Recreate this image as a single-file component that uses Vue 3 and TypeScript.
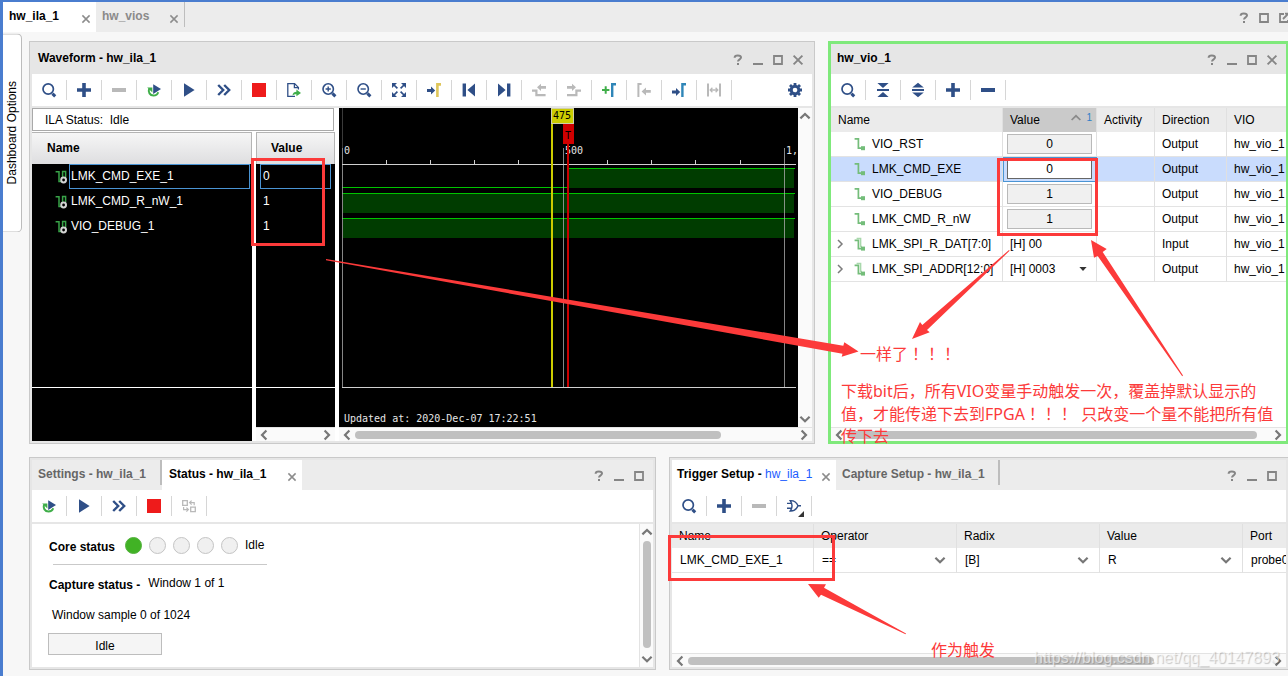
<script setup lang="ts">
import { h, ref, type FunctionalComponent } from 'vue'

interface Shape {
  d: string
  fill?: string
  stroke?: string
  w?: number
}

const NAVY = '#2f4f87'
const GREEN = '#3fae49'
const GRAY = '#b9b9b9'
const DARK = '#777777'
const BLUE = '#2f86b8'

const shapes: Record<string, Shape[]> = {
  search: [
    { d: 'M12.4 7a5.2 5.2 0 1 1-10.4 0a5.2 5.2 0 1 1 10.4 0z', stroke: NAVY, w: 1.7 },
    { d: 'M11.4 11.6L14.2 14.4', stroke: NAVY, w: 3 },
  ],
  plus: [{ d: 'M6.2 1h3.6v5.2H15v3.6H9.8V15H6.2V9.8H1V6.2h5.2z', fill: NAVY }],
  minus: [{ d: 'M1 6h14v4h-14z', fill: NAVY }],
  minusOff: [{ d: 'M1 6h14v4h-14z', fill: GRAY }],
  rerun: [
    { d: 'M3.2 6.5C1.8 10 4 13.6 7.4 13.6C10 13.6 11.6 12.2 12.2 10.2', stroke: GREEN, w: 2 },
    { d: 'M1.2 5.4h5.2v5z', fill: GREEN },
    { d: 'M7.2 2.2L15 7L7.2 12z', fill: NAVY },
  ],
  play: [{ d: 'M3 1.2L13.6 8L3 14.8z', fill: NAVY }],
  forward: [{ d: 'M2.2 3L7.2 8L2.2 13M8.2 3L13.2 8L8.2 13', stroke: NAVY, w: 2.4 }],
  stop: [{ d: 'M1 1h14v14h-14z', fill: '#ee1b1b' }],
  export: [
    { d: 'M9 14.4H1.8V1.6H8.6L12.4 5.4V7.4M8.4 1.8V5.6H12.2', stroke: NAVY, w: 1.3 },
    { d: 'M6.4 13.6C6.8 10.8 8.6 9.8 10.4 9.8V7.6L15 11L10.4 14.2V12.2C8.8 12 7.6 12.6 6.4 13.6z', fill: GREEN },
  ],
  zoomIn: [
    { d: 'M12.4 7a5.2 5.2 0 1 1-10.4 0a5.2 5.2 0 1 1 10.4 0z', stroke: NAVY, w: 1.6 },
    { d: 'M11.4 11.4L14.4 14.4', stroke: NAVY, w: 3 },
    { d: 'M4.6 7H9.8M7.2 4.4V9.6', stroke: NAVY, w: 1.4 },
  ],
  zoomOut: [
    { d: 'M12.4 7a5.2 5.2 0 1 1-10.4 0a5.2 5.2 0 1 1 10.4 0z', stroke: NAVY, w: 1.6 },
    { d: 'M11.4 11.4L14.4 14.4', stroke: NAVY, w: 3 },
    { d: 'M4.6 7H9.8', stroke: NAVY, w: 1.4 },
  ],
  fit: [
    { d: 'M1 1h5l-5 5zM15 1v5l-5-5zM1 15v-5l5 5zM15 15h-5l5-5z', fill: NAVY },
    { d: 'M2.5 2.5L6.4 6.4M13.5 2.5L9.6 6.4M2.5 13.5L6.4 9.6M13.5 13.5L9.6 9.6', stroke: NAVY, w: 1.7 },
  ],
  gotoCursor: [
    { d: 'M1 7h4V4.4L9.2 8.4L5 12.4V10H1z', fill: NAVY },
    { d: 'M15 2.4H11.4V15', stroke: '#dfc65a', w: 2.6 },
  ],
  first: [{ d: 'M1.6 1.4h3.4v13.2h-3.4zM14 1.4v13.2L6.4 8z', fill: NAVY }],
  last: [{ d: 'M11 1.4h3.4v13.2h-3.4zM2 1.4v13.2L9.6 8z', fill: NAVY }],
  prevEdge: [
    { d: 'M1 8.6H5.4V13.2H14.6', stroke: GRAY, w: 2.2 },
    { d: 'M6 5.2L10 1.8V4H15V6.8H10V9z', fill: GRAY },
  ],
  nextEdge: [
    { d: 'M1 13.2H10.4V8.6H15', stroke: GRAY, w: 2.2 },
    { d: 'M10 5.2L6 1.8V4H1V6.8H6V9z', fill: GRAY },
  ],
  addMarker: [
    { d: 'M1 8H8.4M4.7 4.3V11.7', stroke: GREEN, w: 2 },
    { d: 'M15 2.2H11.2V15', stroke: BLUE, w: 2.4 },
  ],
  prevMarker: [
    { d: 'M5.6 2H2.4V15', stroke: GRAY, w: 2 },
    { d: 'M5.6 9.4L10 5.4V8H14.8V10.8H10V13.4z', fill: GRAY },
  ],
  nextMarker: [
    { d: 'M1 8.6h4V6L9.2 10L5 14V11.6H1z', fill: NAVY },
    { d: 'M15 2.2H11.4V15', stroke: BLUE, w: 2.4 },
  ],
  span: [
    { d: 'M2 1.4V14.6M14 1.4V14.6', stroke: GRAY, w: 2 },
    { d: 'M4.4 8H11.6M6.4 5.8L4.2 8L6.4 10.2M9.6 5.8L11.8 8L9.6 10.2', stroke: GRAY, w: 1.3 },
  ],
  gear: [
    { d: 'M8 4.2a3.8 3.8 0 1 1 0 7.6a3.8 3.8 0 1 1 0-7.6z', stroke: NAVY, w: 3 },
    { d: 'M8 1V3.4M8 12.6V15M1 8H3.4M12.6 8H15M3 3L4.7 4.7M11.3 11.3L13 13M13 3L11.3 4.7M4.7 11.3L3 13', stroke: NAVY, w: 2.8 },
  ],
  collapse: [{ d: 'M2.4 1h11.2L8 6zM2 7h12v2H2zM2.4 15h11.2L8 10z', fill: NAVY }],
  expand: [{ d: 'M2.2 5.6h11.6L8 .8zM2 7.1h12v1.8H2zM2.2 10.4h11.6L8 15.2z', fill: NAVY }],
  swap: [
    { d: 'M1.7 2.7h4.6v4.6H1.7zM9.7 9.1h4.6v4.6H9.7z', stroke: GRAY, w: 1.3 },
    { d: 'M8.4 4.6h4.8v2.6M10.6 2.6L8.6 4.6L10.6 6.6M2.6 9v2.6h4.6M5.4 9.6L7.4 11.6L5.4 13.6', stroke: GRAY, w: 1.2 },
  ],
  gate: [
    { d: 'M4.2 2.6C6.6 6 6.6 9.6 4.2 13C8.4 13.2 10.8 11 12 7.8C10.8 4.6 8.4 2.4 4.2 2.6zM1 5.4H5.4M1 10.2H5.4M12 7.8H15', stroke: NAVY, w: 1.4 },
  ],
  help: [
    { d: 'M4.6 5.8C4.6 4 6 3.4 7.8 3.4C9.8 3.4 11 4.2 11 5.6C11 7.4 8 7.4 8 9.6', stroke: '#858585', w: 2 },
    { d: 'M7 11h2v2h-2z', fill: '#858585' },
  ],
  minimize: [{ d: 'M3 11h10v2H3z', fill: '#858585' }],
  maximize: [{ d: 'M4 4h8v8H4z', stroke: '#858585', w: 1.8 }],
  popout: [{ d: 'M8 4H4V12H12V10M7 9L12 4M9 3.6H13V8', stroke: '#858585', w: 1.8 }],
  close: [{ d: 'M3.6 3.6L12.4 12.4M12.4 3.6L3.6 12.4', stroke: '#858585', w: 1.9 }],
  closeTab: [{ d: 'M4.4 4.4L11.6 11.6M11.6 4.4L4.4 11.6', stroke: '#8c8c8c', w: 1.5 }],
  left: [{ d: 'M10.4 3.4L6 8L10.4 12.6', stroke: DARK, w: 2.2 }],
  right: [{ d: 'M5.6 3.4L10 8L5.6 12.6', stroke: DARK, w: 2.2 }],
  up: [{ d: 'M3.4 10.4L8 6L12.6 10.4', stroke: DARK, w: 2.2 }],
  down: [{ d: 'M3.4 5.8L8 10.2L12.6 5.8', stroke: DARK, w: 2.2 }],
  expander: [{ d: 'M6 4L10 8L6 12', stroke: '#7c7c7c', w: 1.5 }],
  sort: [{ d: 'M3.6 10L8 5.8L12.4 10', stroke: '#8a8a8a', w: 1.7 }],
  caret: [{ d: 'M4.4 6h7.2L8 10z', fill: '#333333' }],
  signal: [
    { d: 'M2.6 2.8H6.4V12.2H9', stroke: '#74bd7a', w: 1.7 },
    { d: 'M9 10.2h4v4h-4z', fill: '#74bd7a' },
  ],
  bus: [
    { d: 'M4.6 2.6H8.6V10.4H10', stroke: '#a9d8ac', w: 1.5 },
    { d: 'M2.6 4.4H6.4V12.6H9', stroke: '#74bd7a', w: 1.7 },
    { d: 'M9 10.6h4v4h-4z', fill: '#74bd7a' },
  ],
  probe: [
    { d: 'M2.6 2.8H6V12.4H8M9.6 9V2.6H12.6V8', stroke: '#38a348', w: 1.5 },
    { d: 'M13 11a2.4 2.4 0 1 1-4.8 0a2.4 2.4 0 1 1 4.8 0z', stroke: '#d4d4d4', w: 2 },
  ],
}

const Glyph: FunctionalComponent<{ name: string }> = (props) =>
  h(
    'svg',
    { viewBox: '0 0 16 16', width: 16, height: 16, 'aria-hidden': 'true' },
    shapes[props.name].map((s) =>
      h('path', { d: s.d, fill: s.fill ?? 'none', stroke: s.stroke ?? 'none', 'stroke-width': s.w ?? 0 }),
    ),
  )
Glyph.props = ['name']

const waveTools = [
  'search', 'plus', 'minusOff', 'rerun', 'play', 'forward', 'stop', 'export', 'zoomIn', 'zoomOut',
  'fit', 'gotoCursor', 'first', 'last', 'prevEdge', 'nextEdge', 'addMarker', 'prevMarker', 'nextMarker', 'span',
]
const vioTools = ['search', 'collapse', 'expand', 'plus', 'minus']
const statusTools = ['rerun', 'play', 'forward', 'stop', 'swap']
const triggerTools = ['search', 'plus', 'minusOff', 'gate']

const signals = [
  { name: 'LMK_CMD_EXE_1', value: '0' },
  { name: 'LMK_CMD_R_nW_1', value: '1' },
  { name: 'VIO_DEBUG_1', value: '1' },
]
const selectedSignal = ref(0)

const probes = [
  { name: 'VIO_RST', value: '0', kind: 'button', dir: 'Output' },
  { name: 'LMK_CMD_EXE', value: '0', kind: 'button', dir: 'Output' },
  { name: 'VIO_DEBUG', value: '1', kind: 'button', dir: 'Output' },
  { name: 'LMK_CMD_R_nW', value: '1', kind: 'button', dir: 'Output' },
  { name: 'LMK_SPI_R_DAT[7:0]', value: '[H] 00', kind: 'text', dir: 'Input' },
  { name: 'LMK_SPI_ADDR[12:0]', value: '[H] 0003', kind: 'menu', dir: 'Output' },
]
const selectedProbe = ref(1)

const minorTicks = [47, 91, 135, 179, 268, 312, 356, 401]
const triggerFields = [
  { label: 'Operator', value: '==' },
  { label: 'Radix', value: '[B]' },
  { label: 'Value', value: 'R' },
]
</script>

<template>
  <div class="app">
    <nav class="topbar">
      <button class="tab active wide">hw_ila_1<Glyph name="closeTab" /></button>
      <button class="tab wide muted">hw_vios<Glyph name="closeTab" /></button>
      <span class="tab-rule"></span>
      <div class="win-tools clipped">
        <button aria-label="Help"><Glyph name="help" /></button>
        <button aria-label="Maximize"><Glyph name="maximize" /></button>
        <button aria-label="Float"><Glyph name="popout" /></button>
      </div>
    </nav>

    <div class="main">
      <button class="dashboard">Dashboard Options</button>

      <div class="rows">
        <div class="row upper">
          <section class="panel">
            <header class="title">
              <h2>Waveform - hw_ila_1</h2>
              <div class="win-tools">
                <button aria-label="Help"><Glyph name="help" /></button>
                <button aria-label="Minimize"><Glyph name="minimize" /></button>
                <button aria-label="Maximize"><Glyph name="maximize" /></button>
                <button aria-label="Close"><Glyph name="close" /></button>
              </div>
            </header>
            <div class="toolbar">
              <button v-for="t in waveTools" :key="t" :aria-label="t"><Glyph :name="t" /></button>
              <button class="end" aria-label="Settings"><Glyph name="gear" /></button>
            </div>
            <div class="body wave">
              <div class="wave-list">
                <div class="ila-status">ILA Status:&nbsp; Idle</div>
                <div class="wave-cols">
                  <div class="wave-col">
                    <div class="wave-head">Name</div>
                    <button
                      v-for="(s, i) in signals"
                      :key="s.name"
                      class="sig"
                      :class="{ on: i === selectedSignal }"
                      @click="selectedSignal = i"
                    >
                      <Glyph name="probe" /><span>{{ s.name }}</span>
                    </button>
                    <div class="fill"></div>
                    <div class="foot tall"></div>
                  </div>
                  <div class="wave-col">
                    <div class="wave-head val">Value</div>
                    <div v-for="(s, i) in signals" :key="s.name" class="sig-val" :class="{ on: i === selectedSignal }">
                      <span>{{ s.value }}</span>
                    </div>
                    <div class="fill"></div>
                    <div class="foot"></div>
                    <div class="hscroll"><Glyph name="left" /><i class="gap"></i><Glyph name="right" /></div>
                  </div>
                </div>
              </div>
              <div class="wave-view">
                <div class="wave-main">
                  <div class="canvas">
                    <svg width="459" height="319" viewBox="0 0 459 319" shape-rendering="crispEdges">
                      <path d="M3.5 0V40" stroke="#3a3a3a" />
                      <path d="M230 61h225v19h-225zM4 86h451v19h-451zM4 111h451v19h-451z" fill="#003c00" />
                      <path d="M3 79.5H229M229 60.5H456M3 85.5H456M3 110.5H456" stroke="#00c400" />
                      <path d="M3.5 40V279M224.5 40V279M445.5 40V279" stroke="#a8a8a8" stroke-opacity=".8" />
                      <path d="M3 56.5H457M3 279.5H457" stroke="#d0d0d0" />
                      <path v-for="x in minorTicks" :key="x" :d="`M${x + 0.5} 52V56`" stroke="#d0d0d0" />
                      <g class="ruler">
                        <text x="5" y="46">0</text>
                        <text x="226" y="46">500</text>
                        <text x="447" y="46">1,</text>
                      </g>
                      <path d="M228 36h2v243h-2z" fill="#cc0000" />
                      <path d="M224 16h11v20h-11z" fill="#d00000" />
                      <path d="M212 15h2v264h-2z" fill="#cccc00" />
                      <path d="M212.5 .5h22v15h-22z" fill="#cccc00" stroke="#cfcfa8" />
                      <text class="mark" x="214" y="11">475</text>
                      <text class="mark" x="226" y="31">T</text>
                      <text class="stamp" x="5" y="314">Updated at: 2020-Dec-07 17:22:51</text>
                    </svg>
                  </div>
                  <div class="vscroll"><Glyph name="up" /><i class="gap"></i><Glyph name="down" /></div>
                </div>
                <div class="hscroll">
                  <Glyph name="left" /><div class="track"><i class="thumb w83"></i></div><Glyph name="right" />
                </div>
              </div>
            </div>
          </section>

          <section class="panel focus">
            <header class="title">
              <h2>hw_vio_1</h2>
              <div class="win-tools">
                <button aria-label="Help"><Glyph name="help" /></button>
                <button aria-label="Minimize"><Glyph name="minimize" /></button>
                <button aria-label="Maximize"><Glyph name="maximize" /></button>
                <button aria-label="Close"><Glyph name="close" /></button>
              </div>
            </header>
            <div class="toolbar">
              <button v-for="t in vioTools" :key="t" :aria-label="t"><Glyph :name="t" /></button>
            </div>
            <div class="body column">
              <table class="grid vio">
                <colgroup><col class="c172" /><col class="c94" /><col class="c58" /><col class="c72" /><col /></colgroup>
                <thead>
                  <tr>
                    <th>Name</th>
                    <th class="sorted"><div>Value<span><Glyph name="sort" /><small>1</small></span></div></th>
                    <th>Activity</th>
                    <th>Direction</th>
                    <th>VIO</th>
                  </tr>
                </thead>
                <tbody>
                  <tr v-for="(p, i) in probes" :key="p.name" :class="{ picked: i === selectedProbe }" @click="selectedProbe = i">
                    <td>
                      <div class="probe">
                        <i class="twist"><Glyph v-if="p.kind !== 'button'" name="expander" /></i>
                        <Glyph :name="p.kind === 'button' ? 'signal' : 'bus'" />
                        <span>{{ p.name }}</span>
                      </div>
                    </td>
                    <td :class="{ press: p.kind === 'button' }">
                      <button v-if="p.kind === 'button'" class="bit">{{ p.value }}</button>
                      <div v-else class="hex">{{ p.value }}<Glyph v-if="p.kind === 'menu'" name="caret" /></div>
                    </td>
                    <td></td>
                    <td>{{ p.dir }}</td>
                    <td>hw_vio_1</td>
                  </tr>
                </tbody>
              </table>
              <div class="rest"></div>
              <div class="hscroll">
                <Glyph name="left" /><div class="track"><i class="thumb w97"></i></div><Glyph name="right" />
              </div>
            </div>
          </section>
        </div>

        <div class="row lower">
          <section class="panel">
            <header class="title tabs">
              <button class="tab muted dim">Settings - hw_ila_1</button>
              <span class="tab-rule thick"></span>
              <button class="tab active status-tab">Status - hw_ila_1<Glyph name="closeTab" /></button>
              <div class="win-tools">
                <button aria-label="Help"><Glyph name="help" /></button>
                <button aria-label="Minimize"><Glyph name="minimize" /></button>
                <button aria-label="Maximize"><Glyph name="maximize" /></button>
              </div>
            </header>
            <div class="toolbar">
              <button v-for="t in statusTools" :key="t" :aria-label="t"><Glyph :name="t" /></button>
            </div>
            <div class="body status">
              <div class="status-info">
                <div class="core">
                  <b>Core status</b>
                  <i v-for="n in 5" :key="n" class="lamp" :class="{ lit: n === 1 }"></i>
                  <span>Idle</span>
                </div>
                <div class="capture"><b>Capture status -</b><span>Window 1 of 1</span></div>
                <div class="sample">Window sample 0 of 1024</div>
                <div class="progress" role="status">Idle</div>
              </div>
              <div class="vscroll lined"><Glyph name="up" /><i class="vthumb"></i><Glyph name="down" /></div>
            </div>
          </section>

          <section class="panel open">
            <header class="title tabs">
              <button class="tab active trigger-tab">
                <span>Trigger Setup - <em>hw_ila_1</em></span><Glyph name="closeTab" />
              </button>
              <button class="tab muted dim capture-tab">Capture Setup - hw_ila_1</button>
              <span class="tab-rule thick"></span>
              <div class="win-tools">
                <button aria-label="Help"><Glyph name="help" /></button>
                <button aria-label="Minimize"><Glyph name="minimize" /></button>
                <button aria-label="Maximize"><Glyph name="maximize" /></button>
              </div>
            </header>
            <div class="toolbar">
              <button v-for="t in triggerTools" :key="t" :aria-label="t" :class="{ more: t === 'gate' }">
                <Glyph :name="t" />
              </button>
            </div>
            <div class="body column">
              <table class="grid trigger">
                <colgroup><col class="c142" /><col class="c143" /><col class="c143" /><col class="c143" /><col /></colgroup>
                <thead>
                  <tr>
                    <th>Name</th>
                    <th v-for="f in triggerFields" :key="f.label">{{ f.label }}</th>
                    <th>Port</th>
                  </tr>
                </thead>
                <tbody>
                  <tr>
                    <td>LMK_CMD_EXE_1</td>
                    <td v-for="f in triggerFields" :key="f.label" class="pick">
                      <div>
                        <select :aria-label="f.label"><option>{{ f.value }}</option></select>
                        <Glyph name="down" />
                      </div>
                    </td>
                    <td>probe0</td>
                  </tr>
                </tbody>
              </table>
              <div class="rest"></div>
              <div class="hscroll">
                <Glyph name="left" /><div class="track"><i class="thumb w80"></i></div><Glyph name="right" />
              </div>
            </div>
          </section>
        </div>
      </div>
    </div>

    <svg class="marks" width="1288" height="676" viewBox="0 0 1288 676" aria-hidden="true">
      <g fill="none" stroke="#fc3a3a" stroke-width="3">
        <path d="M252.5 159.5h71v85h-71zM998.5 159.5h98v75h-98zM669.5 536.5h164v43h-164z" />
      </g>
      <g fill="#fc3a3a">
        <path d="M326 259L843.3 345.7L844.3 342.3L858.5 351.5L841.7 356.7L842.5 353.8L326 260.2z" />
        <path d="M1009 250L922.3 325L920 322L912 339L929.7 332.3L927 330L1009.6 250.8z" />
        <path d="M1183 375.6L1102.7 252L1106.7 249L1091 240L1094 257.7L1097.7 256L1182.2 376.2z" />
        <path d="M906 633.4L824 587.7L826 584.3L808 584L818.7 597.7L821 594.7L905.6 634.2z" />
      </g>
    </svg>
    <p class="note same">一样了<span>！！！</span></p>
    <p class="note howto">下载bit后，所有VIO变量手动触发一次，覆盖掉默认显示的<br />值，才能传递下去到FPGA<span>！！！</span>&nbsp; 只改变一个量不能把所有值<br />传下去</p>
    <p class="note cause">作为触发</p>
    <p class="watermark">https://blog.csdn.net/qq_40147893</p>
  </div>
</template>

<style>
body {
  margin: 0;
}
</style>

<style scoped>
.app {
  box-sizing: border-box;
  position: relative;
  display: flex;
  flex-direction: column;
  min-height: 100vh;
  overflow: hidden;
  border-left: 3px solid #4a7dcf;
  border-top: 2px solid #4a7dcf;
  background: #f7f7f7;
  color: #000;
  font: 12px/16px 'Liberation Sans', Arial, sans-serif;
}
.app *,
.app *::after {
  box-sizing: border-box;
}
svg {
  display: block;
  flex: none;
}
button,
select {
  margin: 0;
  padding: 0;
  border: 0;
  background: none;
  color: inherit;
  font: inherit;
}

/* Tabs */
.topbar {
  display: flex;
  height: 30px;
  background: #ececec;
}
.tab {
  display: flex;
  align-items: center;
  justify-content: space-between;
  padding: 0 2px 2px 6px;
  font-weight: bold;
  white-space: nowrap;
}
.tab svg {
  margin-top: 5px;
}
.tab.active {
  background: #fff;
}
.tab.wide {
  width: 93px;
}
.tab.wide + .tab.wide {
  width: 88px;
}
.tab.muted {
  color: #8a8a8a;
}
.tab.dim {
  color: #666;
}
.tab em {
  color: #1a5cff;
  font-style: normal;
  font-weight: normal;
}
.status-tab {
  width: 140px;
  padding-left: 7px;
}
.trigger-tab {
  width: 164px;
  padding-left: 5px;
}
.capture-tab {
  width: 162px;
}
.tabs .dim:first-child {
  width: 128px;
}
.tab-rule {
  width: 1px;
  height: 25px;
  background: #bdbdbd;
}
.tab-rule.thick {
  width: 2px;
}

.win-tools {
  display: flex;
  margin-left: auto;
  padding: 2px 4px 0 0;
}
.win-tools button {
  display: grid;
  place-items: center;
  width: 20px;
}
.win-tools.clipped {
  margin-right: -10px;
}

/* Frame */
.main {
  display: flex;
  flex: 1;
  align-items: stretch;
}
.dashboard {
  align-self: flex-start;
  width: 19px;
  margin-top: 1px;
  padding: 47px 0;
  border: 1px solid #bcbcbc;
  border-right: 0;
  border-radius: 5px 0 0 5px;
  background: #fff;
  line-height: 18px;
  white-space: nowrap;
  writing-mode: vertical-rl;
  transform: rotate(180deg);
}
.rows {
  display: grid;
  flex: 1;
  grid-template-rows: 403fr 213fr;
  gap: 13px;
  min-width: 0;
  padding: 9px 0 6px 7px;
}
.row {
  display: grid;
  gap: 13px;
}
.upper {
  grid-template-columns: minmax(0, 786fr) minmax(0, 460fr);
}
.lower {
  grid-template-columns: minmax(0, 627fr) minmax(0, 619fr);
}
.panel {
  display: flex;
  flex-direction: column;
  padding: 2px;
  border: 1px solid #c9c9c9;
  background: #e6e6e6;
}
.panel.focus {
  padding: 0;
  border: 3px solid #7fe97b;
  border-right-width: 2px;
}
.panel.open {
  border-right: 0;
}
.title {
  display: flex;
  height: 30px;
}
.title h2 {
  margin: 0;
  padding: 6px;
  font-size: 12px;
  line-height: 16px;
}
.title.tabs {
  background: #ececec;
}
.toolbar {
  display: flex;
  align-items: center;
  height: 32px;
  margin-bottom: 2px;
  background: #fff;
}
.toolbar button {
  position: relative;
  display: grid;
  place-items: center;
  width: 35px;
  height: 20px;
  border-right: 1px solid #d6d6d6;
}
.toolbar .end {
  margin-left: auto;
  border: 0;
}
.toolbar .more::after {
  position: absolute;
  right: 7px;
  bottom: -1px;
  border: solid transparent;
  border-width: 0 0 6px 6px;
  border-bottom-color: #333;
  content: '';
}
.body {
  display: flex;
  flex: 1;
  min-height: 0;
  background: #fff;
}
.body.column {
  flex-direction: column;
}

/* Scroll bars */
.hscroll {
  display: flex;
  align-items: center;
  height: 14px;
  border-top: 1px solid #e3e3e3;
  background: #fafafa;
}
.vscroll {
  display: flex;
  flex-direction: column;
  align-items: center;
  width: 14px;
  background: #fafafa;
}
.gap,
.track {
  flex: 1;
}
.track {
  display: flex;
}
.thumb {
  height: 8px;
  border-radius: 4px;
  background: #c0c0c0;
}
.w83 {
  width: 83%;
}
.w97 {
  width: 97%;
}
.w80 {
  width: 80%;
}
.vthumb {
  flex: 1;
  width: 8px;
  margin: 1px 0 3px;
  border-radius: 4px;
  background: #c0c0c0;
}
.vscroll.lined {
  border-left: 1px solid #e3e3e3;
}

/* Waveform */
.wave {
  gap: 4px;
}
.wave-list {
  display: flex;
  flex-direction: column;
  width: 303px;
}
.ila-status {
  height: 23px;
  margin: 0 1px 1px 0;
  padding: 3px 12px;
  border: 1px solid #a9a9a9;
}
.wave-cols {
  display: grid;
  flex: 1;
  grid-template-columns: 220px 79px;
  gap: 4px;
}
.wave-col {
  display: flex;
  flex-direction: column;
  background: #000;
  color: #fff;
}
.wave-head {
  height: 32px;
  padding: 7px 15px;
  border: solid #b4b4b4;
  border-width: 1px 1px 0 0;
  background: linear-gradient(#f6f6f6, #dedee0);
  color: #000;
  font-weight: bold;
}
.wave-head.val {
  padding-left: 14px;
  border-left-width: 1px;
}
.sig {
  display: flex;
  align-items: center;
  height: 25px;
  padding: 0 2px 0 21px;
  text-align: left;
}
.sig span,
.sig-val span {
  flex: 1;
  height: 25px;
  padding: 3px 1px;
  border: 1px solid transparent;
}
.sig-val span {
  padding-left: 2px;
}
.sig.on span,
.sig-val.on span {
  border-color: #4a94d4;
}
.sig-val {
  display: flex;
  padding: 0 4px;
}
.fill {
  flex: 1;
}
.foot {
  height: 40px;
  border-top: 1px solid #fff;
}
.foot.tall {
  height: 54px;
}
.wave-view {
  display: flex;
  flex: 1;
  flex-direction: column;
  min-width: 0;
}
.wave-main {
  display: flex;
  flex: 1;
}
.canvas {
  flex: 1;
  min-width: 0;
  overflow: hidden;
  background: #000;
}
.canvas text {
  font: 10px 'DejaVu Sans Mono', monospace;
}
.ruler,
.stamp {
  fill: #e6e6e6;
}
.mark {
  fill: #000;
}

/* Tables */
.grid {
  width: 100%;
  border-collapse: separate;
  border-spacing: 0;
  table-layout: fixed;
}
.c172 {
  width: 172px;
}
.c94 {
  width: 94px;
}
.c58 {
  width: 58px;
}
.c72 {
  width: 72px;
}
.c142 {
  width: 142px;
}
.c143 {
  width: 143px;
}
.grid th,
.grid td {
  height: 24px;
  padding: 0 0 0 7px;
  overflow: hidden;
  border-right: 1px solid #e0e0e0;
  font-weight: normal;
  text-align: left;
  white-space: nowrap;
}
.grid th {
  background: #ebebeb;
}
.grid td {
  height: 25px;
  border-bottom: 1px solid #e3e3e3;
}
.grid th:last-child,
.grid td:last-child {
  border-right: 0;
}
.grid .sorted {
  background: #cacaca;
}
.sorted div,
.sorted span {
  display: flex;
  align-items: center;
}
.sorted div {
  justify-content: space-between;
  padding-right: 4px;
}
.sorted span {
  gap: 2px;
  height: 16px;
  padding-bottom: 4px;
}
.sorted small {
  color: #2f7fc8;
  font-size: 10px;
}
.picked td {
  background: #c9dcfd;
}
.probe {
  display: flex;
  align-items: center;
  margin-left: -6px;
}
.probe span {
  padding-left: 4px;
}
.twist {
  width: 20px;
}
.grid .press {
  padding: 0 4px;
}
.bit {
  display: block;
  width: 100%;
  height: 20px;
  border: 1px solid #b9b9b9;
  background: #f0f0f0;
}
.picked .press {
  outline: 1px solid #4a94d4;
  outline-offset: -1px;
}
.picked .bit {
  border-color: #666;
  background: #fff;
}
.hex {
  display: flex;
  align-items: center;
  justify-content: space-between;
  padding-right: 5px;
}
.grid .pick {
  padding: 0;
}
.pick div {
  display: grid;
  align-items: center;
}
.pick select,
.pick svg {
  grid-area: 1 / 1;
}
.pick select {
  width: 100%;
  height: 24px;
  padding-left: 8px;
  appearance: none;
}
.pick svg {
  justify-self: end;
  margin-right: 8px;
  pointer-events: none;
}
.trigger td {
  padding-left: 8px;
}
.rest {
  flex: 1;
}

/* Status */
.status-info {
  flex: 1;
  padding: 12px 16px 0;
}
.core {
  display: flex;
  align-items: center;
  gap: 7px;
  width: 219px;
  height: 28px;
  margin-left: 1px;
  padding-bottom: 10px;
}
.core b {
  margin-right: 3px;
  padding-top: 3px;
}
.lamp {
  flex: none;
  width: 17px;
  height: 17px;
  border: 1px solid #c4c4c4;
  border-radius: 50%;
  background: #f0f0f0;
}
.lamp.lit {
  border-color: #55b23f;
  background: #41b225;
}
.capture {
  display: flex;
  gap: 8px;
  width: 214px;
  margin-left: 5px;
  padding-top: 10px;
  border-top: 1px solid #c9c9c9;
}
.capture b {
  margin-left: -4px;
  padding-top: 2px;
}
.sample {
  padding: 14px 4px 10px;
}
.progress {
  width: 114px;
  height: 22px;
  padding-top: 4px;
  border: 1px solid #bdbdbd;
  background: #f5f5f5;
  text-align: center;
}

/* Annotations lie over the whole window */
.marks,
.note,
.watermark {
  position: absolute;
  pointer-events: none;
}
.marks {
  left: -3px;
  top: -2px;
}
.note {
  margin: 0;
  color: #fc3a3a;
  font: 16px/22px 'Noto Sans', 'Noto Sans CJK SC', sans-serif;
  white-space: nowrap;
}
.note span {
  font-family: 'Noto Sans CJK TC', sans-serif;
}
.same {
  left: 857px;
  top: 340px;
}
.howto {
  left: 838px;
  top: 378px;
}
.cause {
  left: 928px;
  top: 637px;
}
.watermark {
  left: 1031px;
  top: 646px;
  margin: 0;
  color: rgba(255, 255, 255, 0.6);
  font: 16px/20px 'Liberation Sans', Arial, sans-serif;
  text-shadow: 1px 1px 1px rgba(0, 0, 0, 0.22);
}
</style>
